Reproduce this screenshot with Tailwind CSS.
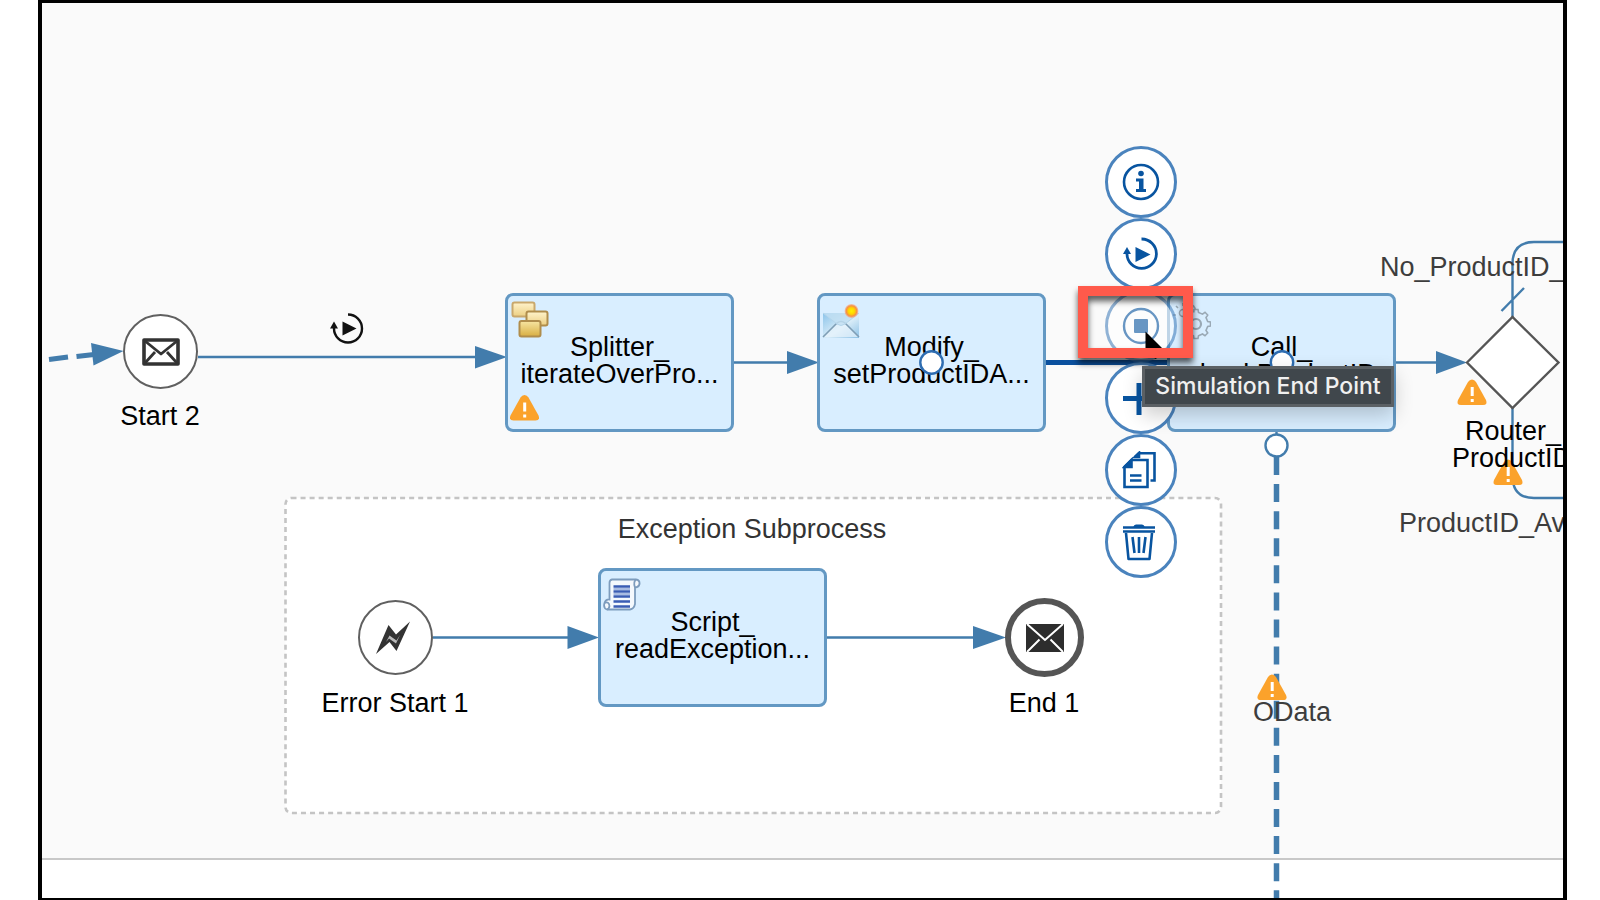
<!DOCTYPE html>
<html lang="en">
<head>
<meta charset="utf-8">
<title>Integration flow</title>
<script src="https://cdn.jsdelivr.net/npm/@tailwindcss/browser@4"></script>
</head>
<body class="bg-white font-['Liberation_Sans',Arial,sans-serif] text-[27px] leading-[27px] text-black">
<main class="relative ml-[38px] mr-[33px] flex min-h-screen flex-col overflow-hidden border-x-4 border-t-3 border-b-2 border-black">
  <section class="flex-1 border-b-2 border-[#c8c8c8] bg-[#fafafa]" aria-label="Integration process lane"></section>
  <footer class="h-[38px] bg-white"></footer>

  <!-- Connectors and subprocess frame -->
  <svg class="absolute left-0 top-0 h-[895px] w-[1521px] max-w-none" viewBox="42 3 1521 895" fill="none" stroke="#427cac" stroke-width="2.4" aria-hidden="true">
    <rect x="285.5" y="498" width="935.5" height="315" rx="6" fill="#fff" stroke="#c4c4c4" stroke-width="2.6" stroke-dasharray="5 4.050"/>
    <path d="M49 359.500L68 357M76.500 356.500L94 354.500" stroke-width="5"/>
    <path d="M198 357H480M734 362.500H790M1396 362.500H1440M433 637.500H570M827 637.500H976"/>
    <path d="M1046 362.500H1169" stroke="#0b509e" stroke-width="5"/>
    <path d="M1276.500 431V458"/>
    <path d="M1276.500 457V900" stroke-width="5.500" stroke-dasharray="18 9.080"/>
    <path d="M1512.500 318V264Q1512.500 242 1534 242H1566M1512.500 407V476Q1512.500 498 1534 498H1566M1501.500 311L1524 288"/>
    <g fill="#427cac" stroke="none">
      <path d="M91 343L93.500 365.500L123.500 351Z"/>
      <path d="M475 346V368.500L507 357Z"/>
      <path d="M787 351V374L819 362.500Z"/>
      <path d="M1436 351V374L1467 362.500Z"/>
      <path d="M567.500 626V649L599 637.500Z"/>
      <path d="M973 626V649L1006 637.500Z"/>
    </g>
    <path d="M1467 362.500L1512.500 317L1558.500 362.500L1512.500 408Z" fill="#fff" stroke="#555"/>
    <g transform="translate(348 328.500)" stroke="#111">
      <path d="M0 -14A14 14 0 1 1 -14 0V-3"/>
      <path d="M-18 0L-14 -7L-10 0Z" fill="#111" stroke="none"/>
      <path d="M-5.500 -7L8.500 0L-5.500 7Z" fill="#111" stroke="none"/>
    </g>
    <g id="warning" fill="#fba22b" stroke="none">
      <path d="M1472 379.500Q1474.500 379.500 1476 382L1486 400Q1488 405 1483 405H1461Q1456 405 1458 400L1468 382Q1469.500 379.500 1472 379.500Z"/>
      <path d="M1472.200 387V396M1472.200 399V402" stroke="#fff" stroke-width="3"/>
    </g>
    <use href="#warning" x="36" y="80"/>
    <use href="#warning" x="-200" y="295"/>
  </svg>

  <!-- Route labels -->
  <span class="absolute left-[1338px] top-[251px] whitespace-nowrap text-[#3d3d3d]">No_ProductID_</span>
  <span class="absolute left-[1357px] top-[507px] whitespace-nowrap text-[#3d3d3d]">ProductID_Av</span>
  <p class="absolute left-[1410px] top-[415px] whitespace-nowrap"><span class="ml-[13px]">Router_</span><br>ProductID</p>
  <span class="absolute left-[1211px] top-[696px] text-[#3d3d3d]">OData</span>
  <h2 class="absolute left-[570px] top-[513px] w-[280px] whitespace-nowrap text-center text-[#333]">Exception Subprocess</h2>

  <!-- Events -->
  <figure class="absolute left-[38px] top-[311px] flex w-[160px] flex-col items-center gap-[14px]">
    <div class="grid size-[75px] place-items-center rounded-full border-2 border-[#606060] bg-white">
      <svg class="ml-[2px] h-[30px] w-[40px]" viewBox="0 0 40 30" fill="none" stroke="#333" stroke-width="3.600" stroke-linejoin="round" aria-hidden="true"><path d="M3 3H37V27H3Z"/><path d="M4 4L20 17L36 4M4 26L14 15M36 26L26 15" stroke-width="2.800"/></svg>
    </div>
    <figcaption>Start 2</figcaption>
  </figure>
  <figure class="absolute left-[273px] top-[597px] flex w-[160px] flex-col items-center gap-[15px]">
    <div class="grid size-[75px] place-items-center rounded-full border-2 border-[#606060] bg-white">
      <svg class="mr-[4px] h-[34px] w-[34px]" viewBox="0 0 34 34" fill="#333" aria-hidden="true"><path d="M0 33L12.500 4L20 13.500L34 .5L20.500 30L13.500 21Z"/><path d="M10 21L13.500 14.500L20.500 19.500L24 14L20 22.500L13 17.500Z" fill="#bbb"/></svg>
    </div>
    <figcaption>Error Start 1</figcaption>
  </figure>
  <figure class="absolute left-[922px] top-[595px] flex w-[160px] flex-col items-center gap-[13px]">
    <div class="grid size-[79px] place-items-center rounded-full border-[6px] border-[#555] bg-white">
      <svg class="ml-[2px] h-[28px] w-[38px]" viewBox="0 0 38 28" fill="none" stroke="#fff" stroke-width="2" aria-hidden="true"><path d="M0 0H38V28H0Z" fill="#2d2d2d" stroke="none"/><path d="M1 0L19 16L37 0M1 28L13.500 15.500M37 28L24.500 15.500"/></svg>
    </div>
    <figcaption>End 1</figcaption>
  </figure>

  <!-- Activities -->
  <article class="absolute left-[463px] top-[290px] h-[139px] w-[229px] rounded-[8px] border-3 border-[#6398c3] bg-[#d9eeff] pt-[38px] text-center">
    <svg class="absolute left-[3px] top-[5px] size-[38px]" viewBox="0 0 38 38" stroke="#b08d4c" stroke-width="2" aria-hidden="true">
      <defs><linearGradient id="gold" x1="0" y1="0" x2="0" y2="1"><stop offset="0" stop-color="#fff3cb"/><stop offset="1" stop-color="#eccf83"/></linearGradient><linearGradient id="deep" x1="0" y1="0" x2="0" y2="1"><stop offset="0" stop-color="#f7e5a2"/><stop offset="1" stop-color="#d8ae42"/></linearGradient></defs>
      <rect x="1.500" y="1.500" width="22" height="14" rx="2" fill="url(#gold)" stroke="#c9a86c"/><rect x="15.500" y="10.500" width="21" height="14" rx="2" fill="url(#gold)"/><rect x="8.500" y="20" width="21" height="15.500" rx="2" fill="url(#deep)"/>
    </svg>
    <p class="whitespace-nowrap">Splitter_<br>iterateOverPro...</p>
    <svg class="absolute left-[2px] top-[99px] h-[26px] w-[29px]" viewBox="1457.500 379.500 29 26" aria-label="Warning"><use href="#warning"/></svg>
  </article>
  <article class="absolute left-[775px] top-[290px] h-[139px] w-[229px] rounded-[8px] border-3 border-[#6398c3] bg-[#d9eeff] pt-[38px] text-center">
    <svg class="absolute left-[2px] top-[8px] h-[36px] w-[38px]" viewBox="0 0 38 36" aria-hidden="true">
      <defs><linearGradient id="mail" x1="0" y1="0" x2="1" y2="1"><stop offset="0" stop-color="#8cc4ea"/><stop offset=".55" stop-color="#d8ecf8"/><stop offset="1" stop-color="#8cc1e6"/></linearGradient><radialGradient id="sun"><stop offset="0" stop-color="#fff200"/><stop offset=".45" stop-color="#ffd500"/><stop offset=".75" stop-color="#f79043"/><stop offset="1" stop-color="#f9a37a" stop-opacity=".5"/></radialGradient></defs>
      <path d="M1 9H37V34H1Z" fill="url(#mail)"/><path d="M1 33L15 19Q19 16 23 19L37 33" fill="#e8f4fc" fill-opacity=".7" stroke="#7f9eb5" stroke-width="1.600"/><path d="M1 9L15 20Q19 23 23 20L37 9" fill="#c3e0f3" fill-opacity=".8" stroke="#b5d6eb"/><circle cx="29.500" cy="7" r="7" fill="url(#sun)"/>
    </svg>
    <p class="whitespace-nowrap">Modify_<br>setProductIDA...</p>
  </article>
  <article class="absolute left-[1125px] top-[290px] h-[139px] w-[229px] rounded-[8px] border-3 border-[#6398c3] bg-[#d9eeff] pt-[38px] text-center">
    <svg class="absolute left-[3px] top-[7px] h-[38px] w-[38px]" viewBox="0 0 38 38" fill="none" stroke="#9aa9b5" stroke-width="1.600" aria-hidden="true">
      <path d="M20.800 9.500L21 6.500H25L25.500 9.500L29.500 11.200L32 9.300L34.700 12L33 14.500L34.700 18.500L37.500 19V23L34.700 23.500L33 27.500L34.700 30L32 32.700L29.500 31L25.500 32.700L25 35.500H21L20.500 32.700L16.500 31L14 32.700L11.300 30L13 27.500L11.300 23.500"/>
      <circle cx="23" cy="21" r="5" stroke-width="2.200"/>
      <path d="M3 12H0M5 5L3 3M10 3V0H15V3L18 5L20.500 3L22.500 6"/><circle cx="10" cy="10" r="3.500"/>
    </svg>
    <p class="whitespace-nowrap">Call_<br>checkProductID</p>
  </article>
  <article class="absolute left-[556px] top-[565px] h-[139px] w-[229px] rounded-[8px] border-3 border-[#6398c3] bg-[#d9eeff] pt-[38px] text-center">
    <svg class="absolute left-[2px] top-[7px] h-[33px] w-[38px]" viewBox="0 0 38 33" fill="#f5f9fd" stroke="#7d9cbd" stroke-width="1.800" aria-hidden="true">
      <path d="M9 1.500H33Q37 2 36.500 6Q36 9 32 9.500V26Q31 31 27 31.500H4Q0 30 1.500 25Q3 21 6.500 21.500V5Q6.500 2 9 1.500Z"/><path d="M32 9.500Q30 4 33 1.500M1.500 25Q6 23 6.500 28Q6 31 4 31.500" fill="none"/><path d="M10.500 8.500H27M10.500 13.500H27M10.500 18.500H27M10.500 23.500H27M10.500 28.500H27" stroke="#3b5db4" stroke-width="2.600"/><path d="M10.500 11H27M10.500 16H27" stroke="#a9bce2"/>
    </svg>
    <p class="whitespace-nowrap">Script_<br>readException...</p>
  </article>

  <!-- Connection handles -->
  <svg class="absolute left-0 top-0 h-[895px] w-[1521px] max-w-none" viewBox="42 3 1521 895" fill="#fff" stroke="#2e6db1" stroke-width="2.400" aria-hidden="true">
    <circle cx="931.500" cy="362.500" r="11.200"/><circle cx="1282" cy="362.500" r="11.200"/><circle cx="1276.500" cy="445.500" r="11" stroke="#427cac"/>
  </svg>

  <!-- Context tools -->
  <nav class="absolute left-[1063px] top-[143px] flex flex-col text-[#0854a0]" aria-label="Connection tools">
    <button type="button" aria-label="Information" class="grid size-[72px] place-items-center rounded-full border-3 border-[#4a83bd] bg-white">
      <svg class="size-[38px]" viewBox="0 0 38 38" fill="currentColor" aria-hidden="true"><circle cx="19" cy="19" r="17" fill="none" stroke="currentColor" stroke-width="2.600"/><circle cx="19" cy="10.500" r="2.800"/><path d="M14 15.500H21.500V26H24V29H14V26H17V18.500H14Z"/></svg>
    </button>
    <button type="button" aria-label="Simulation Start Point" class="grid size-[72px] place-items-center rounded-full border-3 border-[#4a83bd] bg-white">
      <svg class="size-[38px]" viewBox="0 0 38 38" fill="currentColor" aria-hidden="true"><path d="M19.500 4A14.700 14.700 0 1 1 5 18.500V16" fill="none" stroke="currentColor" stroke-width="2.800"/><path d="M1 19L5 12L9 19Z"/><path d="M13.500 12V27L28.500 19.500Z"/></svg>
    </button>
    <button type="button" aria-label="Simulation End Point" class="grid size-[72px] place-items-center rounded-full border-3 border-[#4a83bd] bg-white opacity-60">
      <svg class="size-[38px]" viewBox="0 0 38 38" fill="currentColor" aria-hidden="true"><circle cx="19" cy="19" r="17" fill="none" stroke="currentColor" stroke-width="2.400"/><rect x="12" y="12" width="14" height="14" rx="1"/></svg>
    </button>
    <button type="button" aria-label="Add" class="grid size-[72px] place-items-center rounded-full border-3 border-[#4a83bd] bg-white">
      <svg class="size-[38px]" viewBox="0 0 38 38" fill="none" stroke="currentColor" stroke-width="5" aria-hidden="true"><path d="M1 19.500H33M17 4V36"/></svg>
    </button>
    <button type="button" aria-label="Copy" class="grid size-[72px] place-items-center rounded-full border-3 border-[#4a83bd] bg-white">
      <svg class="size-[38px]" viewBox="0 0 38 38" fill="none" stroke="currentColor" stroke-width="2.600" aria-hidden="true"><path d="M2.500 16L9.500 9H25.500V36H2.500ZM13 6L17 2.300H32.500V29.500H28.500"/><path d="M2.500 16L9.500 9V16Z" fill="currentColor"/><path d="M13 6L17 2V6Z" fill="currentColor"/><path d="M8 24.500H19.500M8 29.500H19.500"/></svg>
    </button>
    <button type="button" aria-label="Delete" class="grid size-[72px] place-items-center rounded-full border-3 border-[#4a83bd] bg-white">
      <svg class="size-[38px]" viewBox="0 0 38 38" fill="none" stroke="currentColor" stroke-width="2.600" stroke-linejoin="round" aria-hidden="true"><path d="M1 4.500H33M1 8.500H33M4 10L6.500 36H27.500L30 10M10.500 14L12.500 30M17 14V30M23.500 14L21.500 30"/><path d="M11 4.500Q12 1.500 14 1.500H20Q22 1.500 23 4.500Z" fill="currentColor" stroke="none"/></svg>
    </button>
  </nav>

  <!-- Pointer, highlight frame and tooltip -->
  <svg class="absolute left-[1103px] top-[328px] h-[30px] w-[22px]" viewBox="0 0 22 30" aria-hidden="true"><path d="M.5 .5V24L6 19L10 28L14 26L10 18H18Z" fill="#000"/></svg>
  <div class="absolute left-[1036px] top-[283px] h-[72px] w-[115px] border-[10px] border-[#ff5a4b] drop-shadow-[0_5px_3px_rgba(0,0,0,0.65)]"></div>
  <div role="tooltip" class="absolute left-[1100px] top-[363px] flex h-[41px] w-[252px] items-center justify-center whitespace-nowrap border-3 border-[#5b6064] bg-[#40474c] font-['Inter',sans-serif] text-[23px] font-medium text-[#f0f0f0] shadow-[0_8px_20px_rgba(0,0,0,0.2)]">Simulation End Point</div>
</main>
</body>
</html>
